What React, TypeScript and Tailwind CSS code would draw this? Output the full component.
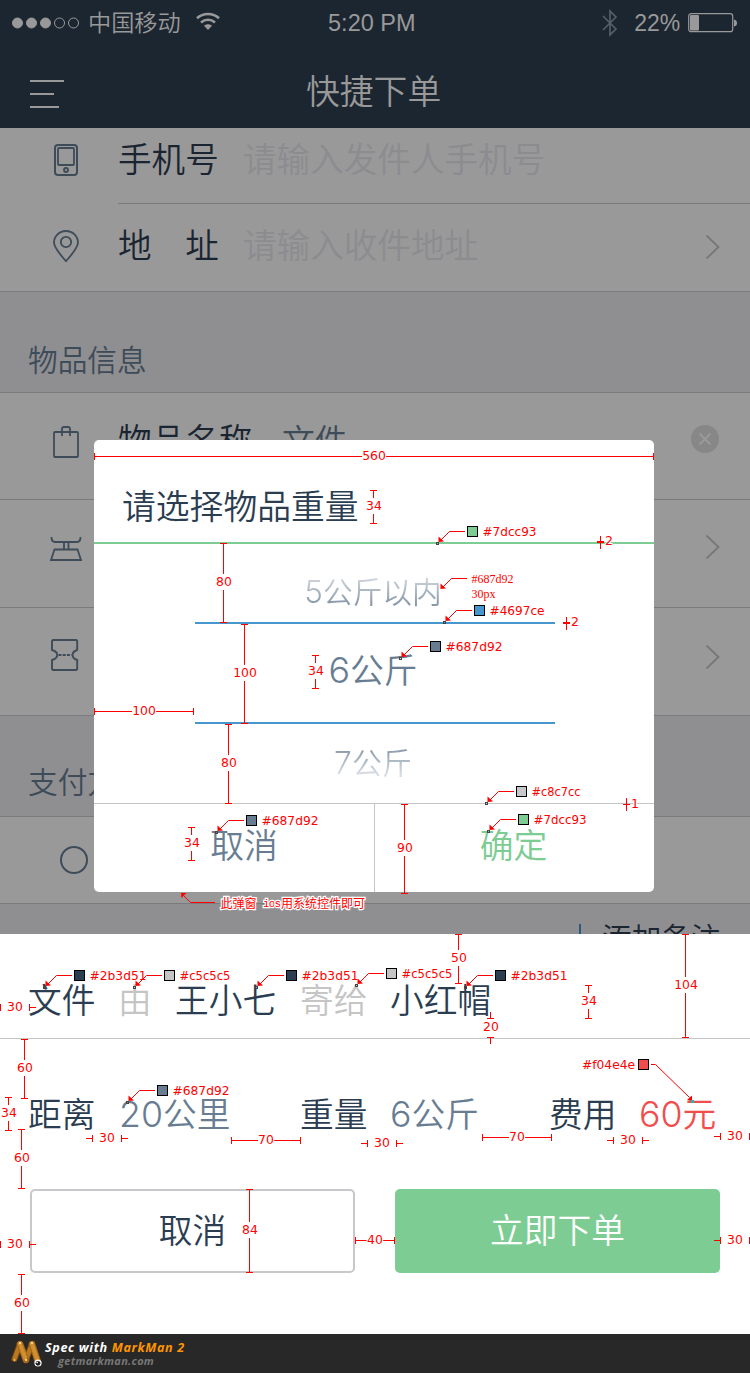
import type { ReactNode } from 'react';

const RED = '#ff0000';

/* ---------- icons ---------- */

function PhoneIcon() {
  return (
    <svg className="h-8 w-8" viewBox="50 144 32 32" fill="none" stroke="#3e4b58" strokeWidth="2">
      <rect x="55" y="145" width="22" height="30" rx="3" />
      <rect x="58" y="148" width="16" height="17" rx="1" strokeWidth="1.8" />
      <circle cx="66" cy="170" r="2" strokeWidth="1.8" />
    </svg>
  );
}

function PinIcon() {
  return (
    <svg className="h-8 w-8" viewBox="50 230 32 32" fill="none" stroke="#3e4b58" strokeWidth="1.8">
      <path d="M66 261.2C63.5 258 54 248.5 54 242.6C54 236 59.4 231 66 231S78 236 78 242.6C78 248.500 68.500 258 66 261.200Z" strokeLinejoin="round" />
      <circle cx="66" cy="242" r="5.200" />
    </svg>
  );
}

function BagIcon() {
  return (
    <svg className="h-8 w-8" viewBox="50 426 32 32" fill="none" stroke="#3e4b58" strokeWidth="1.8">
      <rect x="54" y="432" width="24" height="25" rx="1" />
      <path d="M62 436V429Q62 427 64 427H68Q70 427 70 429V436" />
    </svg>
  );
}

function ScaleIcon() {
  return (
    <svg className="h-8 w-8" viewBox="50 533 32 32" fill="none" stroke="#3e4b58" strokeWidth="1.8">
      <path d="M51.500 537Q51.500 542 55 542H77Q80.500 542 80.500 537M64 542V549.500M68.500 542V549.500M54.500 549.500H77.500L81 560H51Z" />
    </svg>
  );
}

function TicketIcon() {
  return (
    <svg className="h-8 w-8" viewBox="49 639 32 32" fill="none" stroke="#3e4b58" strokeWidth="1.9">
      <path d="M53 640H76.500L77.200 641V650C71 652 71 658 77.200 660V669L76.500 670H53L52 669V660C59 658 59 652 52 650V641Z" strokeLinejoin="round" />
      <path d="M58.500 655H71.500" strokeDasharray="3 1.200" />
    </svg>
  );
}

function Chevron() {
  return (
    <svg className="h-6 w-4" viewBox="0 0 16 24" fill="none" stroke="#77777a" strokeWidth="1.800">
      <path d="M1.500 0.500L13.500 12L1.500 23.500" />
    </svg>
  );
}

function WifiIcon() {
  return (
    <svg className="h-[19px] w-6" viewBox="0 0 24 19" fill="none" stroke="#999" strokeWidth="2.600">
      <path d="M1 6.200C7 0.500 17 0.500 23 6.200" />
      <path d="M5 10.500C9 6.800 15 6.800 19 10.500" />
      <path d="M12 18L8 13.800C10.200 11.800 13.800 11.800 16 13.800Z" fill="#999" stroke="none" />
    </svg>
  );
}

function WormLogo() {
  return (
    <svg className="h-7 w-8 shrink-0" viewBox="0 0 32 28" fill="none" strokeLinecap="round">
      <path d="M9 4L3.500 19" stroke="#8f5410" strokeWidth="6" />
      <path d="M9 4L3.500 19" stroke="#b87920" strokeWidth="4" />
      <path d="M21 4L15 20" stroke="#8f5410" strokeWidth="6" />
      <path d="M21 4L15 20" stroke="#b87920" strokeWidth="4" />
      <path d="M9 4L15 20M21 4L27 22" stroke="#a9681a" strokeWidth="6.500" />
      <path d="M9 4L15 20M21 4L27 22" stroke="#d0902f" strokeWidth="4.500" strokeDasharray="0.500 3" />
      <circle cx="9" cy="3" r="1" fill="#ffe9a8" />
      <circle cx="21" cy="3" r="1" fill="#ffe9a8" />
      <circle cx="3.500" cy="20" r="0.800" fill="#ffe9a8" />
      <circle cx="15" cy="20" r="1" fill="#ffe9a8" />
      <circle cx="27" cy="23" r="3.600" fill="#fff" />
      <circle cx="27" cy="23.300" r="2.400" fill="#222" />
      <circle cx="26.200" cy="22.500" r="0.800" fill="#fff" />
    </svg>
  );
}

/* ---------- page pieces ---------- */

function StatusBar() {
  return (
    <div className="flex h-[46px] items-center pl-3 pr-3 text-[#999999]">
      <div className="flex w-[317px] items-center">
        <svg className="h-3 w-[68px]" viewBox="0 0 68 12" fill="#999" stroke="#999">
          <circle cx="5.500" cy="6" r="5" />
          <circle cx="19.500" cy="6" r="5" />
          <circle cx="33.500" cy="6" r="5" />
          <circle cx="47.500" cy="6" r="5" fill="none" />
          <circle cx="61.500" cy="6" r="5" fill="none" />
        </svg>
        <span className="ml-2 mt-[-5px] text-[23.2px] font-[350] leading-[30px]">中国移动</span>
        <span className="ml-[15px] mt-[-3px]"><WifiIcon /></span>
      </div>
      <span className="w-[275px] font-['Liberation_Sans'] text-[23.5px] leading-[30px]">5:20 PM</span>
      <svg className="h-7 w-4" viewBox="0 0 16 28" fill="none" stroke="#555d66" strokeWidth="1.700">
        <path d="M1 7L14 20L8 26V2L14 8L1 21" />
      </svg>
      <span className="ml-4 w-[54px] font-['Liberation_Sans'] text-[23px] leading-[30px]">22%</span>
      <svg className="h-5 w-[50px] shrink-0" viewBox="0 0 50 20" fill="none">
        <rect x="0.700" y="0.700" width="44" height="18" rx="2.500" stroke="#999" strokeWidth="1.200" />
        <rect x="2" y="2" width="9" height="15.500" rx="1" fill="#999" />
        <path d="M46 6.500Q49 7 49 10T46 13.500Z" fill="#999" />
      </svg>
    </div>
  );
}

function Header() {
  return (
    <header className="h-32 bg-[#1c2631]">
      <StatusBar />
      <div className="flex h-[82px] items-start">
        <svg className="ml-[30px] mt-[33px] h-[30px] w-[34px]" viewBox="0 0 34 30" stroke="#999" strokeWidth="2">
          <path d="M0 2H34M0 15H24M0 28H29" />
        </svg>
        <h1 className="ml-[242px] mt-6 text-[33.8px] font-[350] leading-[40px] text-[#999999]">快捷下单</h1>
      </div>
    </header>
  );
}

function Section({ label, raised }: { label: string; raised?: boolean }) {
  return (
    <div className={`flex h-[101px] items-start border-b border-[#7b7b7e] bg-[#8f8f92] pl-7 text-[29.7px] font-[350] leading-[38px] text-[#3e4b58] ${raised ? 'pt-[46px]' : 'pt-[48px]'}`}>
      {label}
    </div>
  );
}

function Num({ children }: { children: ReactNode }) {
  return <span className="font-['Inter'] text-[1.06em] font-light leading-[0]">{children}</span>;
}

function FormList() {
  const row = 'flex items-start border-[#7b7b7e] bg-[#999999] text-[33.6px] font-[350] leading-[40px] text-[#1a2531]';
  return (
    <div>
      <div className={`${row} h-[75px] pl-[50px] pt-[10px]`}>
        <span className="mt-[6px]"><PhoneIcon /></span>
        <span className="ml-9 w-[125px]">手机号</span>
        <span className="text-[#8c8c90]">请输入发件人手机号</span>
      </div>
      <div className="flex h-px bg-[#999999] pl-[118px]"><div className="h-px grow bg-[#7b7b7e]" /></div>
      <div className={`${row} h-[88px] border-b pl-[50px] pt-[20px]`}>
        <span className="mt-[6px]"><PinIcon /></span>
        <span className="ml-9 w-[125px] whitespace-pre">地　址</span>
        <span className="w-[462px] text-[#8c8c90]">请输入收件地址</span>
        <span className="mt-[11px]"><Chevron /></span>
      </div>
      <Section label="物品信息" />
      <div className={`${row} h-[107px] border-b pl-[50px] pt-[26px]`}>
        <span className="mt-[7px]"><BagIcon /></span>
        <span className="ml-9 w-[164px]">物品名称</span>
        <span className="w-[409px] text-[32.8px] text-[#3e4b58]">文件</span>
        <svg className="mt-[6px] h-7 w-7" viewBox="0 0 28 28">
          <circle cx="14" cy="14" r="14" fill="#878787" />
          <path d="M8.500 8.500L19.500 19.500M19.500 8.500L8.500 19.500" stroke="#999" strokeWidth="2.200" />
        </svg>
      </div>
      <div className={`${row} h-[108px] border-b pl-[50px]`}>
        <span className="mt-[33px]"><ScaleIcon /></span>
        <span className="ml-[623px] mt-[35px]"><Chevron /></span>
      </div>
      <div className={`${row} h-[108px] border-b pl-[49px]`}>
        <span className="mt-[31px]"><TicketIcon /></span>
        <span className="ml-[624px] mt-[37px]"><Chevron /></span>
      </div>
      <Section label="支付方式" raised />
      <div className="flex h-[87px] items-center border-b border-[#7b7b7e] bg-[#999999] pl-[60px]">
        <div className="h-7 w-7 rounded-full border-2 border-[#3e4b58]" />
      </div>
      <div className="flex h-[30px] items-start overflow-hidden bg-[#8f8f92] pl-[579px]">
        <div className="mt-5 h-[30px] w-[2px] bg-[#2a5b7c]" />
        <span className="ml-[21px] mt-[14px] shrink-0 text-[29.7px] font-[350] leading-[38px] text-[#1a2531]">添加备注</span>
      </div>
    </div>
  );
}

function WeightDialog() {
  return (
    <div className="absolute left-[94px] top-[440px] flex h-[452px] w-[560px] flex-col rounded-[5px] bg-white text-[33.8px] font-[350] leading-[40px]">
      <div className="h-[104px] border-b-2 border-[#7dcc93] pl-7 pt-[45px] text-[#2b3d51]">请选择物品重量</div>
      <div className="ml-[101px] flex h-[259px] w-[360px] flex-col items-center">
        <div className="h-[78px] pt-[27px]">
          <span className="block bg-linear-to-b from-[#ccd3da] from-20% to-[#8a9aab] to-80% bg-clip-text pr-1 text-[29.7px] leading-[40px] text-transparent"><Num>5</Num>公斤以内</span>
        </div>
        <div className="flex h-[102px] w-full justify-center border-y-2 border-[#4697ce] pr-1 pt-[25px] text-[#687d92]">
          <span><Num>6</Num>公斤</span>
        </div>
        <div className="pt-[17px]">
          <span className="block bg-linear-to-b from-[#8a9aab] from-20% to-[#d5dbe1] to-80% bg-clip-text pr-1 text-[30px] leading-[40px] text-transparent"><Num>7</Num>公斤</span>
        </div>
      </div>
      <div className="flex h-[89px] border-t border-[#c5c5c5]">
        <button className="w-[281px] border-r border-[#c5c5c5] pb-2 pl-5 text-[#687d92]">取消</button>
        <button className="grow pb-2 pr-[2px] text-[#7dcc93]">确定</button>
      </div>
    </div>
  );
}

function OrderSheet() {
  return (
    <div className="h-[400px] bg-white text-[33.7px] font-[350] leading-[40px] text-[#2b3d51]">
      <div className="flex h-[105px] items-start border-b border-[#c5c5c5] pl-7 pt-[45px]">
        <span className="w-[90px]">文件</span>
        <span className="w-[57px] text-[#c5c5c5]">由</span>
        <span className="w-[125px]">王小七</span>
        <span className="w-[90px] text-[#c5c5c5]">寄给</span>
        <span>小红帽</span>
      </div>
      <div className="flex h-[150px] items-start whitespace-nowrap pl-7 pt-[54px]">
        <span className="w-[91px]">距离</span>
        <span className="w-[181px] text-[#687d92]"><Num>20</Num>公里</span>
        <span className="w-[90px]">重量</span>
        <span className="w-[159px] text-[#687d92]"><Num>6</Num>公斤</span>
        <span className="w-[90px]">费用</span>
        <span className="text-[#f04e4e]"><Num>60</Num>元</span>
      </div>
      <div className="flex gap-10 px-[30px]">
        <button className="h-[84px] w-[325px] rounded-[5px] border-2 border-[#c8c7cc] pb-1">取消</button>
        <button className="h-[84px] w-[325px] rounded-[5px] bg-[#7dcc93] pb-1 text-white">立即下单</button>
      </div>
    </div>
  );
}

function Footer() {
  return (
    <footer className="flex h-[39px] bg-[#282828] pl-[11px] pt-[6px] font-['Open_Sans'] font-bold italic">
      <WormLogo />
      <div className="ml-[2px] leading-none">
        <div className="whitespace-nowrap text-[12.6px] leading-[16px] tracking-[0.64px] text-white">
          Spec with <span className="text-[#ff9500]">MarkMan 2</span>
        </div>
        <div className="ml-[13px] text-[11px] leading-[9px] tracking-[0.3px] text-[#777777]">getmarkman.com</div>
      </div>
    </footer>
  );
}

/* ---------- measurement annotations ---------- */

function Tag({ x, y, w, children }: { x: number; y: number; w: number; children: string }) {
  return (
    <text x={x} y={y + 4} textLength={w} lengthAdjust="spacingAndGlyphs" fill={RED} stroke="#fff" strokeWidth="2" strokeLinejoin="round" paintOrder="stroke">
      {children}
    </text>
  );
}

const widthOf = (label: string) => label.length * 7.900;

function Line({ d }: { d: string }) {
  return <path d={d} stroke={RED} strokeWidth="1" fill="none" shapeRendering="crispEdges" />;
}

// [x, top, bottom, label, label centre y]
const vertical: [number, number, number, string, number][] = [
  [373, 490, 523, '34', 506],
  [223, 543, 622, '80', 582],
  [244, 624, 723, '100', 672.500],
  [315, 655, 688, '34', 671],
  [228, 724, 803, '80', 763],
  [191, 827, 860, '34', 843],
  [404, 804, 893, '90', 848],
  [458, 934, 983, '50', 958],
  [685, 934, 1037, '104', 985],
  [588, 985, 1018, '34', 1001],
  [24, 1039, 1098, '60', 1068],
  [8, 1097, 1130, '34', 1113],
  [21, 1129, 1188, '60', 1158],
  [249, 1189, 1272, '84', 1230],
  [21, 1274, 1333, '60', 1303],
];

// [left, right, y, label]
const horizontal: [number, number, number, string][] = [
  [94, 653, 456, '560'],
  [94, 193, 711, '100'],
  [231, 300, 1140, '70'],
  [482, 551, 1137, '70'],
  [355, 394, 1240, '40'],
];

const outside: [number, number, number][] = [
  [0, 29, 1007],
  [92, 121, 1138],
  [367, 396, 1143],
  [613, 642, 1140],
  [720, 749, 1136],
  [0, 29, 1244],
  [720, 749, 1240],
];

// [swatch x, swatch y, colour, label width]
const swatches: [number, number, string, number][] = [
  [467, 526, '#7dcc93', 54],
  [474, 605, '#4697ce', 55],
  [430, 641, '#687d92', 57],
  [516, 786, '#c8c7cc', 49],
  [518, 814, '#7dcc93', 53],
  [246, 815, '#687d92', 57],
  [74, 970, '#2b3d51', 57],
  [164, 970, '#c5c5c5', 51],
  [286, 970, '#2b3d51', 57],
  [386, 968, '#c5c5c5', 51],
  [495, 970, '#2b3d51', 57],
  [157, 1085, '#687d92', 57],
];

function Leader({ x, y }: { x: number; y: number }) {
  return (
    <g>
      <path d={`M${x} ${y + 0.5}h-15.500l-9 9`} stroke={RED} fill="none" />
      <path d={`M${x - 26.5} ${y + 11}v-5.500l5.500 5z`} fill={RED} />
    </g>
  );
}

function Annotations() {
  return (
    <svg className="pointer-events-none absolute left-0 top-0 h-[1373px] w-[750px] font-['DejaVu_Sans'] text-[12.3px]" viewBox="0 0 750 1373">
      {vertical.map(([x, a, b, label, c], i) => (
        <g key={i}>
          <Line d={`M${x - 3} ${a + 0.5}h7M${x + 0.5} ${a}V${c - 8}M${x + 0.5} ${c + 8}V${b}M${x - 3} ${b + 0.5}h7`} />
          <Tag x={x + 1 - widthOf(label) / 2} y={c} w={widthOf(label)}>{label}</Tag>
        </g>
      ))}
      {horizontal.map(([a, b, y, label], i) => {
        const c = (a + b + 1) / 2;
        const h = widthOf(label) / 2;
        return (
          <g key={i}>
            <Line d={`M${a + 0.5} ${y - 3}v7M${a} ${y + 0.5}H${c - h}M${c + h} ${y + 0.5}H${b}M${b + 0.5} ${y - 3}v7`} />
            <Tag x={c - h} y={y} w={h * 2}>{label}</Tag>
          </g>
        );
      })}
      {outside.map(([a, b, y], i) => (
        <g key={i}>
          <Line d={`M${a + 0.5} ${y - 3}v7M${a - 6} ${y + 0.5}h7M${b + 0.5} ${y - 3}v7M${b} ${y + 0.5}h7`} />
          <Tag x={(a + b) / 2 - 7.5} y={y} w={15.8}>30</Tag>
        </g>
      ))}

      <Line d="M490.500 1012V1018M487 1018.500h7M487 1037.500h7M490.500 1037v7" />
      <Tag x={483} y={1027} w={15.8}>20</Tag>

      <Tag x={605} y={541} w={8}>2</Tag>
      <Line d="M600.500 536v13M597 541.500h7M597 542.500h7" />
      <Tag x={571} y={622} w={8}>2</Tag>
      <Line d="M566.500 617v13M563 622.500h7M563 623.500h7" />
      <Tag x={631} y={804} w={8}>1</Tag>
      <Line d="M626.500 798v13M623 804.500h7" />

      {swatches.map(([x, y, color, w], i) => (
        <g key={i}>
          <Leader x={x - 2} y={y + 5} />
          <rect x={x - 30.5} y={y + 16.5} width="2" height="2" fill="none" stroke="#444" strokeWidth="1" />
          <rect x={x + 0.5} y={y + 0.5} width="10" height="10" fill={color} stroke="#000" />
          <Tag x={x + 15.5} y={y + 5.5} w={w}>{color}</Tag>
        </g>
      ))}

      <Leader x={467} y={578} />
      <g className="font-['Liberation_Serif'] text-[12px]">
        <Tag x={471.5} y={579} w={42}>#687d92</Tag>
        <Tag x={471.5} y={594} w={24}>30px</Tag>
      </g>

      <Tag x={582} y={1064.5} w={53}>#f04e4e</Tag>
      <rect x="638.500" y="1059.500" width="10" height="10" fill="#f04e4e" stroke="#000" />
      <path d="M651 1064.500h4.500l34 33" stroke={RED} fill="none" />
      <path d="M692 1101v-5.500l-5 4.500z" fill={RED} />
      <rect x="691" y="1100" width="3" height="3" fill="#2ab5b5" />

      <path d="M215 902.500H190.500L184 896" stroke={RED} fill="none" />
      <path d="M181 893h5.500l-5 5z" fill={RED} />
      <g fill={RED} stroke="#fff" strokeWidth="2.500" paintOrder="stroke" className="font-['Noto_Sans_CJK_SC'] text-[12px]">
        <text x="220.500" y="907.500">此弹窗</text>
        <text x="263" y="907" textLength="18" className="font-['Liberation_Mono'] text-[11px]">ios</text>
        <text x="281" y="907.500">用系统控件即可</text>
      </g>
    </svg>
  );
}

export default function App() {
  return (
    <div className="relative h-[1373px] w-[750px] overflow-hidden font-['Noto_Sans_CJK_SC',sans-serif]">
      <Header />
      <FormList />
      <OrderSheet />
      <Footer />
      <WeightDialog />
      <Annotations />
    </div>
  );
}
